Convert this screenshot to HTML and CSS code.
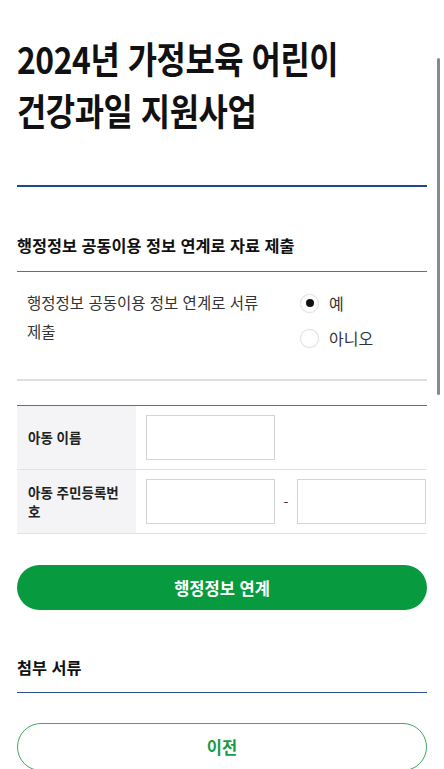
FILE: index.html
```html
<!DOCTYPE html>
<html lang="ko">
<head>
<meta charset="utf-8">
<title>2024년 가정보육 어린이 건강과일 지원사업</title>
<link rel="stylesheet" href="styles.css">
</head>
<body>
<div class="page">
  <div class="title-wrap">
    <h1 class="title">2024년 가정보육 어린이<br>건강과일 지원사업</h1>
  </div>

  <h2 class="sec-head">행정정보 공동이용 정보 연계로 자료 제출</h2>
  <div class="radio-row">
    <div class="radio-text">행정정보 공동이용 정보 연계로 서류 제출</div>
    <div class="radio-group">
      <label class="radio"><span class="circle checked"></span><span class="rlabel">예</span></label>
      <label class="radio"><span class="circle"></span><span class="rlabel">아니오</span></label>
    </div>
  </div>

  <div class="form-table">
    <div class="trow">
      <div class="th">아동 이름</div>
      <div class="td"><span class="input"></span></div>
    </div>
    <div class="trow">
      <div class="th">아동 주민등록번호</div>
      <div class="td"><span class="input"></span><span class="dash">-</span><span class="input"></span></div>
    </div>
  </div>

  <button class="btn-primary">행정정보 연계</button>

  <h2 class="sec-head attach">첨부 서류</h2>

  <button class="btn-outline">이전</button>
</div>
<div class="scrollbar"></div>
</body>
</html>
```
FILE: styles.css
```css
html, body {
  margin: 0;
  padding: 0;
  background: #fff;
}
body {
  font-family: "Noto Sans CJK KR", "Noto Sans", sans-serif;
  color: #111;
  overflow: hidden;
  height: 769px;
}
.page {
  padding: 0 17px;
}
.title-wrap {
  padding-top: 32px;
  padding-bottom: 49px;
  border-bottom: 2px solid #1d4a8a;
}
.title {
  margin: 0;
  font-size: 37px;
  font-weight: 700;
  letter-spacing: -0.5px;
  line-height: 52px;
  color: #111;
  white-space: nowrap;
  transform: scaleX(0.86);
  transform-origin: left center;
}
.sec-head {
  margin: 46px 0 0;
  font-size: 16.3px;
  font-weight: 700;
  line-height: 24px;
  padding-bottom: 14px;
  border-bottom: 1.5px solid #4f72a3;
  color: #111;
}
.radio-row {
  display: flex;
  padding: 16px 0 30px 10px;
  border-bottom: 2px solid #e0e0e0;
}
.radio-text {
  width: 235px;
  padding-right: 38px;
  font-size: 15.5px;
  line-height: 29px;
  color: #333;
}
.radio-group {
  display: flex;
  flex-direction: column;
  gap: 13px;
  padding-top: 4px;
}
.radio {
  display: flex;
  align-items: center;
  gap: 10px;
  font-size: 16px;
  line-height: 22px;
  color: #333;
}
.circle {
  width: 17px;
  height: 17px;
  border-radius: 50%;
  border: 1.5px solid #e2e2e2;
  box-shadow: 0 0 1px rgba(0,0,0,0.1);
  display: flex;
  align-items: center;
  justify-content: center;
  background: #fff;
}
.circle.checked::after {
  content: "";
  width: 8px;
  height: 8px;
  border-radius: 50%;
  background: #111;
}
.form-table {
  margin-top: 24px;
  border-top: 1.5px solid #4f72a3;
}
.trow {
  display: flex;
  border-bottom: 1.5px solid #e2e2e2;
}
.th {
  width: 98px;
  padding: 0 10px 0 11px;
  background: #f4f4f6;
  font-size: 13.5px;
  font-weight: 700;
  line-height: 19px;
  display: flex;
  align-items: center;
  color: #222;
}
.td {
  flex: 1;
  display: flex;
  align-items: center;
  padding: 9px 0 9px 10px;
}
.input {
  width: 127px;
  height: 43px;
  border: 1px solid #d4d4d4;
  background: #fff;
  display: block;
}
.dash {
  width: 22px;
  text-align: center;
  font-size: 14px;
  color: #333;
}
.btn-primary {
  display: block;
  width: 100%;
  margin-top: 31px;
  height: 45px;
  border: none;
  border-radius: 23px;
  background: #079a3e;
  color: #fff;
  font-family: inherit;
  font-size: 16.5px;
  font-weight: 700;
}
.sec-head.attach {
  margin-top: 45px;
  padding-bottom: 13px;
  border-bottom: 1.5px solid #2d5391;
}
.btn-outline {
  display: block;
  width: 100%;
  margin-top: 30px;
  height: 48px;
  border: 1.5px solid #3fa862;
  border-radius: 24px;
  background: #fff;
  color: #179a45;
  font-family: inherit;
  font-size: 16.5px;
  font-weight: 700;
}
.scrollbar {
  position: fixed;
  top: 58px;
  right: 4px;
  width: 3px;
  height: 337px;
  border-radius: 2px;
  background: #8a8a8a;
}
```
